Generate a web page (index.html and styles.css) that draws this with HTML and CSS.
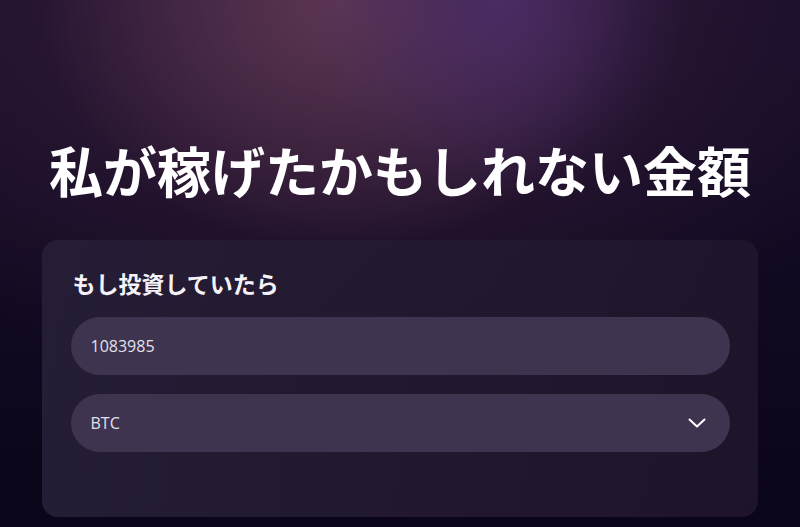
FILE: index.html
```html
<!DOCTYPE html>
<html lang="ja">
<head>
<meta charset="utf-8">
<link rel="stylesheet" href="styles.css">
</head>
<body>
<main class="page">
  <h1 class="title">私が稼げたかもしれない金額</h1>
  <section class="card">
    <h2 class="label">もし投資していたら</h2>
    <div class="field">1083985</div>
    <div class="field select">
      <span>BTC</span>
      <svg class="chev" width="18" height="10" viewBox="0 0 18 10"><path d="M1.5 1.5 L9 8.5 L16.5 1.5" fill="none" stroke="#fff" stroke-width="2" stroke-linecap="round" stroke-linejoin="round"/></svg>
    </div>
  </section>
</main>
</body>
</html>
```
FILE: styles.css
```css
html, body {
  margin: 0;
  height: 100%;
}
body {
  background-color: #0b0519;
  background-image:
    radial-gradient(ellipse 190px 200px at 500px 0px, rgba(76, 44, 108, 0.8), rgba(76, 44, 108, 0) 100%),
    radial-gradient(ellipse 300px 250px at 340px 0px, rgba(98, 58, 86, 0.85), rgba(98, 58, 86, 0) 100%),
    radial-gradient(ellipse 600px 360px at 330px 30px, rgba(62, 34, 62, 0.8), rgba(62, 34, 62, 0) 100%),
    linear-gradient(180deg, #170d2a 0%, #120a22 45%, #0b0519 100%);
  font-family: "Noto Sans CJK JP", "Noto Sans", sans-serif;
  color: #fff;
  overflow: hidden;
}
.page {
  padding-top: 138px;
  display: flex;
  flex-direction: column;
  align-items: center;
}
.title {
  margin: 0 0 38px;
  font-size: 54px;
  line-height: 64px;
  font-weight: 700;
  text-align: center;
}
.card {
  box-sizing: border-box;
  width: 716px;
  margin-left: -1px;
  padding: 27px 28px 65px 29px;
  border-radius: 16px;
  background: linear-gradient(90deg, rgba(38, 30, 54, 0.95), rgba(32, 22, 44, 0.9));
  display: flex;
  flex-direction: column;
  gap: 19px;
}
.label {
  margin: 0 0 -2px 2px;
  font-size: 23px;
  line-height: 33px;
  font-weight: 700;
  color: #f4f2f7;
}
.field {
  height: 58px;
  border-radius: 29px;
  background: #3e344f;
  display: flex;
  align-items: center;
  padding: 0 22px 0 20px;
  font-family: "Open Sans", "Noto Sans", sans-serif;
  font-size: 16px;
  color: #e4e0ea;
}
.select {
  justify-content: space-between;
}
.chev {
  display: block;
  margin-right: 2px;
}
```
